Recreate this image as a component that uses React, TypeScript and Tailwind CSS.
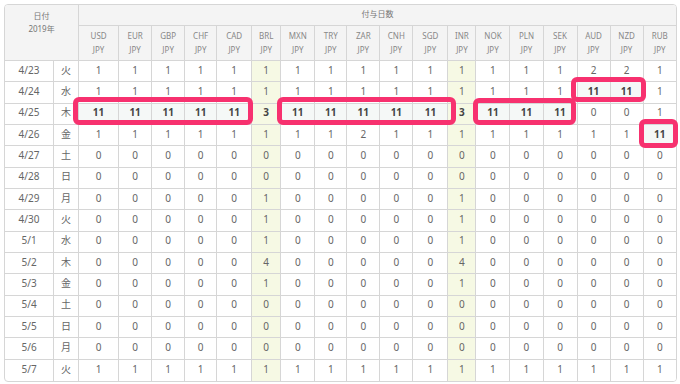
import React from "react";

const cur = ["USD","EUR","GBP","CHF","CAD","BRL","MXN","TRY","ZAR","CNH","SGD","INR","NOK","PLN","SEK","AUD","NZD","RUB"];
const widths = [40,33,33,32,35,29,34,32,33,33,35,28,34,33,34,33,33,32];
const hl = new Set([5, 11]);

type Row = { d: string; w: string; v: number[] };
const z = (b: number, i: number, rest = 0) =>
  cur.map((_, k) => (k === 5 ? b : k === 11 ? i : rest));

const rows: Row[] = [
  { d: "4/23", w: "火", v: [1,1,1,1,1,1,1,1,1,1,1,1,1,1,1,2,2,1] },
  { d: "4/24", w: "水", v: [1,1,1,1,1,1,1,1,1,1,1,1,1,1,1,11,11,1] },
  { d: "4/25", w: "木", v: [11,11,11,11,11,3,11,11,11,11,11,3,11,11,11,0,0,1] },
  { d: "4/26", w: "金", v: [1,1,1,1,1,1,1,1,2,1,1,1,1,1,1,1,1,11] },
  { d: "4/27", w: "土", v: z(0, 0) },
  { d: "4/28", w: "日", v: z(0, 0) },
  { d: "4/29", w: "月", v: z(1, 1) },
  { d: "4/30", w: "火", v: z(1, 1) },
  { d: "5/1", w: "水", v: z(1, 1) },
  { d: "5/2", w: "木", v: z(4, 4) },
  { d: "5/3", w: "金", v: z(1, 1) },
  { d: "5/4", w: "土", v: z(0, 0) },
  { d: "5/5", w: "日", v: z(0, 0) },
  { d: "5/6", w: "月", v: z(0, 0) },
  { d: "5/7", w: "火", v: z(1, 1, 1) },
];

const boxes = [
  { l: 73, t: 97, w: 180, h: 28 },
  { l: 277, t: 97, w: 179, h: 28 },
  { l: 473, t: 98, w: 103, h: 27 },
  { l: 571, t: 77, w: 75, h: 25 },
  { l: 639, t: 119, w: 39, h: 29 },
];

export default function App() {
  return (
    <div
      className="relative w-[680px] h-[384px] bg-white pl-[4px] pt-[4px]"
      style={{ fontFamily: '"Noto Sans", "Noto Sans CJK JP", sans-serif' }}
    >
      <div className="w-[673px] border border-[#d6d6d6] rounded-[4px] overflow-hidden">
        <table className="table-fixed border-separate border-spacing-0 w-[671px]">
          <colgroup>
            <col style={{ width: 49 }} />
            <col style={{ width: 25 }} />
            {widths.map((w, i) => (
              <col key={i} style={{ width: w }} />
            ))}
          </colgroup>
          <thead>
            <tr className="h-[21px]">
              <th
                colSpan={2}
                rowSpan={2}
                className="bg-[#f4f4f4] border-r border-b border-[#d6d6d6] align-top pt-[4px] font-normal text-[8px] leading-[13px] text-[#777]"
              >
                <div>日付</div>
                <div>2019年</div>
              </th>
              <th
                colSpan={18}
                className="bg-[#f4f4f4] border-b border-[#d6d6d6] font-normal text-[8px] text-[#777] align-middle pb-[3px]"
              >
                付与日数
              </th>
            </tr>
            <tr className="h-[35px]">
              {cur.map((c, i) => (
                <th
                  key={c}
                  className={`bg-[#f4f4f4] border-b border-[#d6d6d6] font-normal text-[8px] leading-[14px] text-[#888] ${i < 17 ? "border-r" : ""}`}
                >
                  <div>{c}</div>
                  <div>JPY</div>
                </th>
              ))}
            </tr>
          </thead>
          <tbody>
            {rows.map((r, ri) => {
              const last = ri === rows.length - 1;
              const bb = last ? "" : "border-b";
              return (
                <tr key={ri} className="h-[21.33px]">
                  <td className={`${bb} border-r border-[#d6d6d6] text-center text-[10px] text-[#666] pb-[2px]`}>{r.d}</td>
                  <td className={`${bb} border-r border-[#d6d6d6] text-center text-[10px] text-[#666] pb-[2px]`}>{r.w}</td>
                  {r.v.map((v, ci) => {
                    const big = v === 11;
                    const bg = hl.has(ci) ? "bg-[#f6f9e4]" : big ? "bg-[#f5f8f7]" : "bg-white";
                    return (
                      <td
                        key={ci}
                        className={`${bb} ${ci < 17 ? "border-r" : ""} border-[#d6d6d6] text-center text-[10px] pb-[2px] ${bg} ${big || (ri === 2 && hl.has(ci)) ? "font-bold text-[#444]" : "text-[#666]"}`}
                      >
                        {v}
                      </td>
                    );
                  })}
                </tr>
              );
            })}
          </tbody>
        </table>
      </div>
      {boxes.map((b, i) => (
        <div
          key={i}
          className="absolute border-[5px] border-[#f7316f] rounded-[6px]"
          style={{ left: b.l, top: b.t, width: b.w, height: b.h }}
        />
      ))}
    </div>
  );
}
